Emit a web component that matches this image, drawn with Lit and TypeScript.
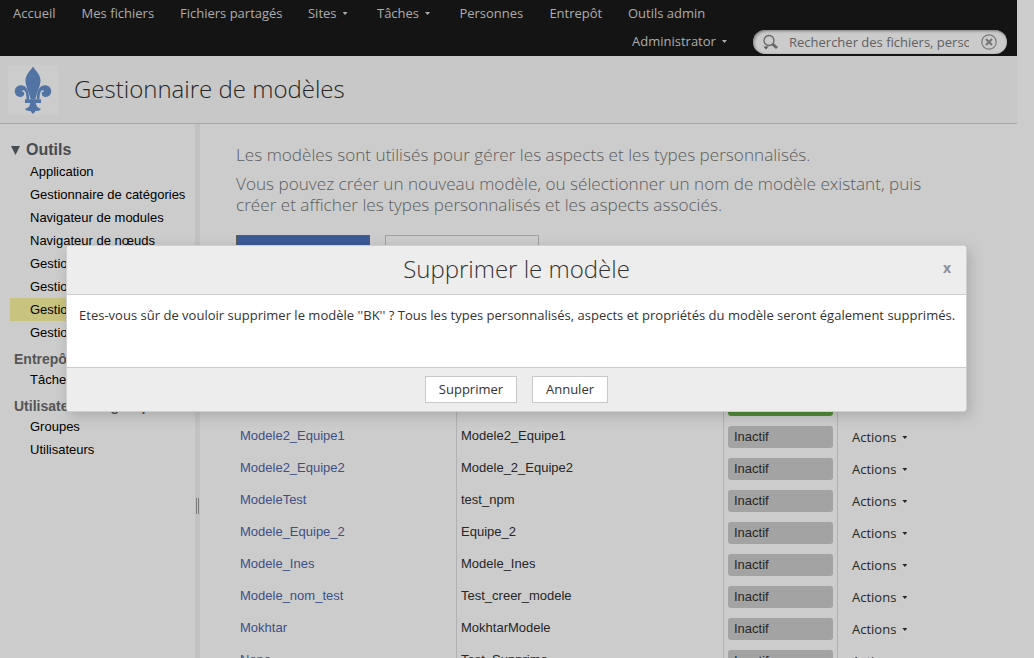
import { LitElement, html, css, svg } from "lit";
import { customElement } from "lit/decorators.js";

interface NavItem { label: string; menu?: boolean; cls: string }

const NAV: NavItem[] = [
  { label: "Accueil", cls: "n1" },
  { label: "Mes fichiers", cls: "n2" },
  { label: "Fichiers partagés", cls: "n3" },
  { label: "Sites", menu: true, cls: "n4" },
  { label: "Tâches", menu: true, cls: "n5" },
  { label: "Personnes", cls: "n6" },
  { label: "Entrepôt", cls: "n7" },
  { label: "Outils admin", cls: "n8" },
];

const TOOLS = [
  "Application",
  "Gestionnaire de catégories",
  "Navigateur de modules",
  "Navigateur de nœuds",
  "Gestionnaire de balises",
  "Gestionnaire de sites",
  "Gestionnaire de modèles",
  "Gestionnaire de réplication",
];

const MODELS: [string, string, boolean][] = [
  ["BK", "BK", true],
  ["Modele2_Equipe1", "Modele2_Equipe1", false],
  ["Modele2_Equipe2", "Modele_2_Equipe2", false],
  ["ModeleTest", "test_npm", false],
  ["Modele_Equipe_2", "Equipe_2", false],
  ["Modele_Ines", "Modele_Ines", false],
  ["Modele_nom_test", "Test_creer_modele", false],
  ["Mokhtar", "MokhtarModele", false],
  ["Nono", "Test_Supprimo", false],
];

const petal = svg`
  <path d="M21.200 34.500 C21.300 26 18.500 20.300 13 20.300 C9.500 20.300 6.800 22.800 6.800 26.300 C6.800 29.800 9.300 32 12.200 32 C14.600 32 16.300 30.600 16.300 28.700 C16.300 27.400 15.300 26.500 14 26.600 C14.300 25.300 15.300 24.900 16.400 25.600 C18.200 27 18.500 30.500 18.500 34.500Z"/>`;

const fleur = svg`
  <path d="M25 1.500 C22.300 6 17.500 9.500 17.500 15.500 C17.500 21 20.700 26 22.700 34.500 H27.300 C29.300 26 32.500 21 32.500 15.500 C32.500 9.500 27.700 6 25 1.500Z"/>
  ${petal}
  <g transform="translate(50 0) scale(-1 1)">${petal}</g>
  <path d="M17 34.300 H33 V38 H17Z"/>
  <path d="M22.300 37.500 H27.700 C27.900 41 29.600 43 33 43.700 C31.800 45.800 29.600 46.300 27.700 45.700 C27 47 26 48.200 25 49 C24 48.200 23 47 22.300 45.700 C20.400 46.300 18.200 45.800 17 43.700 C20.400 43 22.100 41 22.300 37.500Z"/>`;

@customElement("app-root")
export class AppRoot extends LitElement {
  static styles = css`
    :host { display: block; position: relative; width: 1034px; height: 658px; overflow: hidden; background: #ccc;
      font-family: "Open Sans", "Noto Sans", sans-serif; font-size: 13px; color: #262626; }
    * { box-sizing: border-box; }
    .page { width: 1017px; height: 658px; display: flex; flex-direction: column; overflow: hidden; white-space: nowrap; }
    .top { height: 56px; flex: none; background: #141414; color: #adadad; }
    .nav { height: 28px; display: flex; padding-left: 13px; line-height: 27px; }
    .nav > span { flex: none; }
    .n1 { width: 68.6px; } .n2 { width: 98.4px; } .n3 { width: 128px; } .n4 { width: 69px; }
    .n5 { width: 82.4px; } .n6 { width: 90px; } .n7 { width: 78.6px; } .n8 { width: 90px; }
    .caret { display: inline-block; width: 5px; height: 3px; background: currentColor; clip-path: polygon(0 0, 100% 0, 50% 100%); margin-left: 6px; vertical-align: 3px; }
    .user { height: 28px; display: flex; justify-content: flex-end; padding-right: 10px; line-height: 27px; }
    .who { width: 121px; }
    .search { width: 254px; height: 24px; margin-top: 2px; border-radius: 12px; background: #cbcbcb; box-shadow: inset 1px 1px 3px #777;
      display: flex; align-items: center; padding: 0 9px; color: #606060; line-height: 24px; }
    .search .q { width: 180px; overflow: hidden; margin-left: 10px; }
    .search svg { flex: none; }
    .clear { margin-left: 12px; }
    .title { height: 68px; flex: none; background: #c8c8c8; border-bottom: 1px solid #a8a8a8; display: flex; align-items: center; padding-left: 8px; }
    .logo { background: #cccccc; width: 50px; height: 50px; fill: #5274a4; }
    h1 { margin: 0 0 1px 16px; font-size: 24px; font-weight: 300; line-height: 34px; color: #262626; }
    .main { flex: 1; display: flex; min-height: 0; }
    .side { width: 195px; flex: none; padding: 15px 0 0 10px; font-family: "Liberation Sans", Arial, sans-serif; color: #000; }
    .side h2 { margin: 0; font-size: 16px; line-height: 21px; height: 21px; color: #474b54; display: flex; align-items: center; }
    .side h2 svg { margin-right: 6px; }
    .item { height: 23px; line-height: 23px; padding-left: 20px; overflow: hidden; }
    .item.on { background: #c8c37f; }
    .side h3 { margin: 0; font-size: 14px; line-height: 24px; height: 24px; padding: 3px 0 0 4px; color: #555; }
    .sash { width: 5px; flex: none; background: #c2c2c2; display: flex; flex-direction: column; justify-content: center; padding: 229px 1px 0; }
    .grip { height: 16px; border: solid #7c7c7c; border-width: 0 1px; width: 3px; }
    .content { flex: 1; padding: 20px 0 0 36px; }
    .intro { font-size: 17.150px; font-weight: 300; line-height: 21px; color: #5c5c5c; margin: 0 0 8px; height: 21px; }
    .intro.two { height: 42px; margin-bottom: 20px; }
    .acts { display: flex; gap: 15px; height: 30px; }
    .acts span { width: 154px; border: 1px solid #a0a0a0; line-height: 16px; padding-top: 11px; text-align: center; }
    .acts .primary { width: 134px; border-color: #5a6055; background: #3d5a98; color: #ccc; }
    .grid { margin-top: 123px; font-family: "Liberation Sans", Arial, sans-serif; }
    .row { height: 32px; display: grid; grid-template-columns: 221px 267px 114px 1fr; }
    .row > div { border-right: 1px solid #b1b1b1; padding: 0 4px; line-height: 31px; overflow: hidden; }
    .row > div:first-child { color: #3d5085; }
    .row > .act { border: 0; font-family: "Open Sans", sans-serif; padding: 2px 0 0 14px; line-height: 30px; }
    .badge { height: 22px; margin-top: 6px; border-radius: 3px; background: #a3a3a3; line-height: 21px; padding-left: 6px; width: 105px; }
    .badge.live { background: #538b38; }
    .dialog { position: absolute; left: 66px; top: 245px; width: 901px; height: 167px; border: 1px solid #cfcfcf; border-radius: 4px; overflow: hidden; background: #fff;
      box-shadow: 3px 4px 14px rgba(0,0,0,.17); display: flex; flex-direction: column; white-space: nowrap; color: #333; }
    .dh { height: 49px; flex: none; background: #ededed; border-bottom: 1px solid #ccc; display: grid; grid-template-columns: 38px 1fr 38px; align-items: center; text-align: center; padding-bottom: 2px; }
    .dh h2 { margin: 0; font-size: 24px; font-weight: 300; grid-column: 2; line-height: 34px; }
    .x { font-weight: 700; color: #8d919e; line-height: 16px; font-size: 14px; padding-bottom: 2px; }
    .db { flex: 1; padding: 10px 12px; line-height: 20px; letter-spacing: 0.012px; }
    .df { height: 44px; flex: none; background: #ededed; border-top: 1px solid #ccc; display: flex; justify-content: center; gap: 15px; padding: 8px 0 0 0; }
    .btn { height: 27px; width: 92px; border: 1px solid #c8c8c8; background: #fff; line-height: 25px; text-align: center; }
    .btn.b2 { width: 76px; }
  `;

  render() {
    return html`
      <div class="page">
        <div class="top">
          <div class="nav">${NAV.map(n => html`<span class=${n.cls}>${n.label}${n.menu ? html`<i class="caret"></i>` : ""}</span>`)}</div>
          <div class="user">
            <span class="who">Administrator<i class="caret"></i></span>
            <div class="search">
              <svg width="17" height="17" viewBox="0 0 17 17"><circle cx="7" cy="6.500" r="5" fill="none" stroke="#666" stroke-width="1.300"/><path d="M10.500 10 L15 14" stroke="#666" stroke-width="3"/><path d="M1.500 12.500h5l-2.500 3z" fill="#555"/></svg>
              <span class="q">Rechercher des fichiers, personnes</span>
              <svg class="clear" width="16" height="16" viewBox="0 0 16 16"><circle cx="8" cy="8" r="7.200" fill="none" stroke="#777" stroke-width="1.200"/><path d="M5 5l6 6M11 5l-6 6" stroke="#777" stroke-width="2.200"/></svg>
            </div>
          </div>
        </div>
        <div class="title"><svg class="logo" viewBox="0 0 50 50">${fleur}</svg><h1>Gestionnaire de modèles</h1></div>
        <div class="main">
          <div class="side">
            <h2><svg width="10" height="10" viewBox="0 0 10 10"><path d="M1 1h9l-4.500 9z" fill="#474b54"/></svg>Outils</h2>
            ${TOOLS.map((t, i) => html`<div class="item ${i === 6 ? "on" : ""}">${t}</div>`)}
            <h3>Entrepôt</h3>
            <div class="item">Tâches</div>
            <h3>Utilisateurs et groupes</h3>
            <div class="item">Groupes</div>
            <div class="item">Utilisateurs</div>
          </div>
          <div class="sash"><div class="grip"></div></div>
          <div class="content">
            <p class="intro">Les modèles sont utilisés pour gérer les aspects et les types personnalisés.</p>
            <p class="intro two">Vous pouvez créer un nouveau modèle, ou sélectionner un nom de modèle existant, puis<br>créer et afficher les types personnalisés et les aspects associés.</p>
            <div class="acts"><span class="primary">Créer un modèle</span><span>Importer un modèle</span></div>
            <div class="grid">
              ${MODELS.map(([name, ns, live]) => html`<div class="row">
                <div>${name}</div><div>${ns}</div>
                <div><div class="badge ${live ? "live" : ""}">${live ? "Actif" : "Inactif"}</div></div>
                <div class="act">Actions<i class="caret"></i></div>
              </div>`)}
            </div>
          </div>
        </div>
      </div>
      <div class="dialog">
        <div class="dh"><h2>Supprimer le modèle</h2><span class="x">x</span></div>
        <div class="db">Etes-vous sûr de vouloir supprimer le modèle ''BK'' ? Tous les types personnalisés, aspects et propriétés du modèle seront également supprimés.</div>
        <div class="df"><span class="btn">Supprimer</span><span class="btn b2">Annuler</span></div>
      </div>`;
  }
}
